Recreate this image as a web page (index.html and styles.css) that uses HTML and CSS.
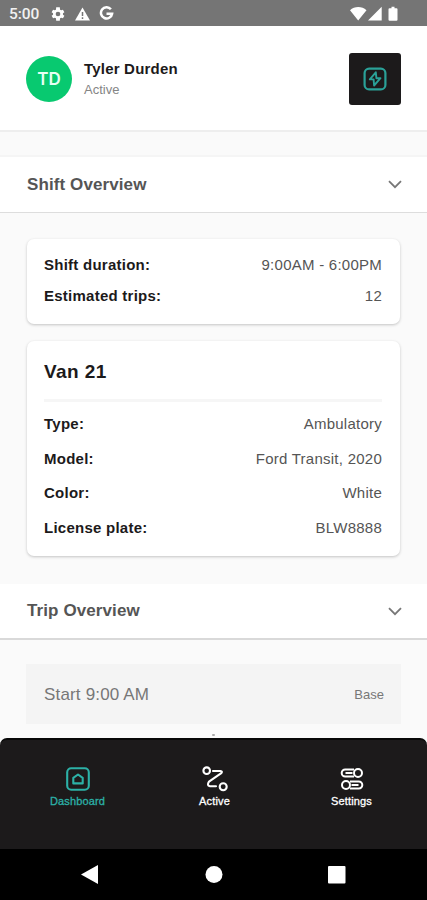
FILE: index.html
```html
<!DOCTYPE html>
<html lang="en">
<head>
<meta charset="utf-8">
<meta name="viewport" content="width=device-width">
<title>Driver dashboard</title>
<link rel="stylesheet" href="styles.css">
</head>
<body>
<div class="screen">
  <header class="status">
    <span class="clock">5:00</span>
    <svg class="gear" width="16" height="16" viewBox="0 0 24 24" fill="#fff"><path fill-rule="evenodd" d="M19.4 13c.1-.6.1-1.400 0-2l2.200-1.700-2.200-3.800-2.600 1a8 8 0 0 0-1.700-1L14.700 2H9.300l-.4 3.500a8 8 0 0 0-1.700 1l-2.600-1-2.200 3.800L4.600 11a8 8 0 0 0 0 2l-2.200 1.700 2.200 3.800 2.600-1a8 8 0 0 0 1.700 1l.4 3.500h5.400l.4-3.500a8 8 0 0 0 1.700-1l2.600 1 2.200-3.800zM12 15.500a3.500 3.500 0 1 1 0-7 3.500 3.500 0 0 1 0 7z"/></svg>
    <svg class="warn" width="15" height="14" viewBox="0 0 15 14"><path d="M7.500 .5 15 13.500H0z" fill="#fff"/><path d="M7.500 5v4M7.500 10.300v1.700" stroke="#757575" stroke-width="1.500"/></svg>
    <svg class="google" width="15" height="15" viewBox="0 0 15 15" fill="none" stroke="#fff" stroke-width="2.500"><path d="M11.900 3.300A5.600 5.600 0 1 0 13.100 7.700H7.500"/></svg>
    <svg class="signals" width="49" height="16" viewBox="0 0 49 16" fill="#fff"><path d="M0 4.300C4.500-.1 12-.1 16.500 4.300L8.200 14.500zM31.700 .8V14.500H18z"/><path d="M41.500 .8h3v1.400h2q1 0 1 1v10.600q0 1-1 1h-7q-1 0-1-1V3.200q0-1 1-1h2z"/></svg>
  </header>
  <section class="profile">
    <div class="avatar">TD</div>
    <div class="who"><div class="name">Tyler Durden</div><div class="state">Active</div></div>
    <button class="power" aria-label="Power"><svg width="24" height="24" viewBox="0 0 24 24" fill="none" stroke="#2aa198" stroke-width="2.200" stroke-linejoin="round"><rect x="1.600" y="1.600" width="20.800" height="20.800" rx="4.500"/><path d="M12.800 5.300 6.800 12.400H10.600L11.100 18.500 17.500 11.200H13.400z" stroke-width="1.900"/></svg></button>
  </section>
  <main>
    <div class="section first"><h2>Shift Overview</h2><svg width="14" height="9" viewBox="0 0 14 9" fill="none" stroke="#777" stroke-width="1.800"><path d="M1 1.200 7 7.200 13 1.200"/></svg></div>
    <div class="card shift">
      <div class="row"><b>Shift duration:</b><span>9:00AM - 6:00PM</span></div>
      <div class="row"><b>Estimated trips:</b><span>12</span></div>
    </div>
    <div class="card van">
      <h3>Van 21</h3>
      <div class="row"><b>Type:</b><span>Ambulatory</span></div>
      <div class="row"><b>Model:</b><span>Ford Transit, 2020</span></div>
      <div class="row"><b>Color:</b><span>White</span></div>
      <div class="row"><b>License plate:</b><span>BLW8888</span></div>
    </div>
    <div class="section trip"><h2>Trip Overview</h2><svg width="14" height="9" viewBox="0 0 14 9" fill="none" stroke="#777" stroke-width="1.800"><path d="M1 1.200 7 7.200 13 1.200"/></svg></div>
    <div class="start"><span>Start 9:00 AM</span><small>Base</small></div>
    <div class="dot"></div>
  </main>
  <div class="tabwrap">
  <nav class="tabs">
    <a class="on"><svg width="24" height="24" viewBox="0 0 24 24" fill="none" stroke="currentColor" stroke-width="2.100"><rect x="1.200" y="1.200" width="21.600" height="21.600" rx="4"/><path d="M7.300 10.900 12 7.500l4.700 3.400v5.500H7.300z" stroke-linejoin="round"/></svg><span>Dashboard</span></a>
    <a><svg width="26" height="26" viewBox="0 0 26 26" fill="none" stroke="currentColor" stroke-width="2.100" stroke-linejoin="round" stroke-linecap="round"><circle cx="4.700" cy="4.700" r="3.300"/><circle cx="21.200" cy="20.800" r="3.500"/><path d="M11 5H18.500Q20.800 5.200 19.300 7.200L7 15.600Q4.500 19.500 8 20.200H14"/></svg><span>Active</span></a>
    <a><svg width="24" height="24" viewBox="0 0 24 24" fill="none" stroke="currentColor" stroke-width="2"><path d="M14 2.500H5.200a3.500 3.500 0 0 0 0 7H14M10 14.500h8.800a3.500 3.500 0 0 1 0 7H10M5.500 6h7M11.500 18h7"/><circle cx="18" cy="6" r="4"/><circle cx="6" cy="18" r="4"/></svg><span>Settings</span></a>
  </nav>
  </div>
  <footer class="system">
    <svg width="427" height="51" viewBox="0 0 427 51" fill="#fff"><path d="M81 25.500 98 16v19z"/><circle cx="214" cy="25.500" r="8.500"/><rect x="328" y="17" width="17.500" height="17.500" rx="1"/></svg>
  </footer>
</div>
</body>
</html>
```
FILE: styles.css
```css
* { box-sizing: border-box; }
body { margin: 0; background: #fafafa; font-family: "Liberation Sans", Arial, sans-serif; color: #1c1a1b; }
h2, h3 { margin: 0; }
.screen { width: 427px; height: 900px; display: flex; flex-direction: column; overflow: hidden; }
.status { height: 26px; flex: none; background: #757575; display: flex; align-items: center; padding: 1px 28px 0 9px; color: #fff; }
.clock { font: 500 15.500px Roboto, sans-serif; width: 41px; letter-spacing: -.1px; color: #f1f1f1; }
.warn { margin-left: 9px; }
.google { margin-left: 9px; }
.signals { margin-left: auto; }
.profile { height: 106px; flex: none; display: flex; align-items: center; padding: 2px 26px 0; background: #fff; border-bottom: 2px solid #eee; }
.avatar { width: 46px; height: 46px; border-radius: 50%; background: #08c970; color: #e7fff3; display: grid; place-items: center; font: 600 17px Inter, sans-serif; }
.who { margin-left: 12px; }
.name { font-weight: bold; font-size: 15px; line-height: 20px; letter-spacing: .2px; }
.state { font-size: 13px; line-height: 20px; margin-top: 1px; color: #858585; }
.power { margin-left: auto; width: 52px; height: 52px; padding: 0; border: 0; border-radius: 3px; background: #1c1a1b; display: grid; place-items: center; }
main { flex: 1; min-height: 0; overflow: hidden; background: #fafafa; padding-top: 23px; }
.section { height: 56px; display: flex; align-items: center; justify-content: space-between; padding: 0 25px 0 27px; background: #fff; border-bottom: 1px solid #ddd; }
.section h2 { font-size: 17px; letter-spacing: .1px; color: #555; }
.section.first { height: 58px; border-top: 2px solid #f5f5f5; }
.card { margin: 0 27px; padding: 0 18px 0 17px; background: #fff; border-radius: 7px; box-shadow: 0 1px 3px rgba(0,0,0,.22); }
.row { display: flex; justify-content: space-between; align-items: center; font-size: 15px; letter-spacing: .25px; }
.row span { color: #555; }
.shift { height: 85px; margin-top: 26px; padding-top: 10px; }
.shift .row { height: 31px; }
.van { height: 215px; margin-top: 17px; }
.van h3 { height: 61px; margin-bottom: 4px; padding-top: 1px; line-height: 59px; font-size: 19px; letter-spacing: .4px; border-bottom: 3px solid #f6f6f6; }
.van .row { height: 34.700px; }
.trip { margin-top: 28px; border-bottom: 2px solid #d9d9d9; }
.start { height: 60px; margin: 24px 26px 0; padding: 1px 17px 0 18px; display: flex; align-items: center; justify-content: space-between; background: #f4f4f4; color: #777; font-size: 17px; letter-spacing: .17px; }
.start small { font-size: 13px; letter-spacing: 0; }
.dot { width: 3px; height: 2px; margin: 10px auto 0; background: #aaa; border-radius: 1px; }
.tabwrap { flex: none; background: #fafafa; }
.tabs { height: 111px; border-radius: 7px 7px 0 0; border-top: 2px solid #080808; background: #1c1a1b; display: flex; padding: 26px 7px 0 9px; color: #fff; }
.tabs a { flex: 1; display: flex; flex-direction: column; align-items: center; font-size: 11px; }
.tabs svg { height: 26px; }
.tabs span { line-height: 13px; margin-top: 3px; letter-spacing: .15px; -webkit-text-stroke: .3px currentColor; }
.tabs .on { color: #2cb1a7; }
.system { height: 51px; flex: none; background: #000; }
.system svg { display: block; }
```
